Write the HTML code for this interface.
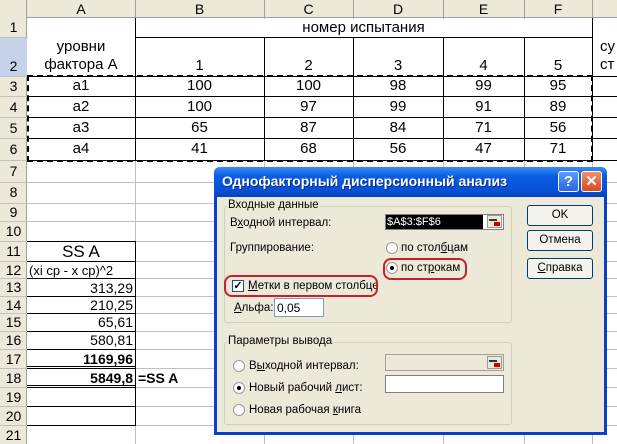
<!DOCTYPE html>
<html><head><meta charset="utf-8"><style>
*{margin:0;padding:0;box-sizing:border-box}
body{width:617px;height:444px;overflow:hidden;background:#fff;position:relative;font-family:"Liberation Sans",Arial,sans-serif}
div{position:absolute}
.h{background:#ECE9D8;color:#000;font-size:14px;text-align:center}
.vl{width:1px;background:#c0c0c0}
.hl{height:1px;background:#c0c0c0}
.bv{width:1px;background:#000}
.bh{height:1px;background:#000}
.c{font-size:15px;text-align:center;color:#000}
.r{font-size:14px;text-align:right;color:#000}
.d{font-family:"Liberation Sans",Tahoma,sans-serif;font-size:11.5px;color:#000;white-space:nowrap}
.btn{background:#f4f3ee;border:1px solid #003c74;border-radius:3px;font-size:11.5px;text-align:center;line-height:18px}
.rad{width:12px;height:12px;border-radius:50%;background:#fff;border:1px solid #9a9a9a}
</style></head><body>
<div class="h" style="left:0;top:0;width:617px;height:18px;border-bottom:1px solid #a0a0a0"></div>
<div class="h" style="left:0;top:0;width:27px;height:444px;border-right:1px solid #a0a0a0"></div>
<div class="h" style="left:0;top:37px;width:27px;height:39px;background:#c5d2ea"></div>
<div class="h" style="left:27px;top:1px;width:108px">A</div>
<div class="h" style="left:135px;top:1px;width:129px">B</div>
<div class="h" style="left:264px;top:1px;width:89px">C</div>
<div class="h" style="left:353px;top:1px;width:90px">D</div>
<div class="h" style="left:443px;top:1px;width:81px">E</div>
<div class="h" style="left:524px;top:1px;width:68px">F</div>
<div class="vl" style="left:135px;top:0;height:18px;background:#a0a0a0"></div>
<div class="vl" style="left:264px;top:0;height:18px;background:#a0a0a0"></div>
<div class="vl" style="left:353px;top:0;height:18px;background:#a0a0a0"></div>
<div class="vl" style="left:443px;top:0;height:18px;background:#a0a0a0"></div>
<div class="vl" style="left:524px;top:0;height:18px;background:#a0a0a0"></div>
<div class="vl" style="left:592px;top:0;height:18px;background:#a0a0a0"></div>
<div class="h" style="left:0;top:19px;width:27px;background:none">1</div>
<div class="h" style="left:0;top:58px;width:27px;background:none">2</div>
<div class="h" style="left:0;top:78px;width:27px;background:none">3</div>
<div class="h" style="left:0;top:99px;width:27px;background:none">4</div>
<div class="h" style="left:0;top:120px;width:27px;background:none">5</div>
<div class="h" style="left:0;top:141px;width:27px;background:none">6</div>
<div class="h" style="left:0;top:163px;width:27px;background:none">7</div>
<div class="h" style="left:0;top:184px;width:27px;background:none">8</div>
<div class="h" style="left:0;top:204px;width:27px;background:none">9</div>
<div class="h" style="left:0;top:223px;width:27px;background:none">10</div>
<div class="h" style="left:0;top:243px;width:27px;background:none">11</div>
<div class="h" style="left:0;top:262px;width:27px;background:none">12</div>
<div class="h" style="left:0;top:279px;width:27px;background:none">13</div>
<div class="h" style="left:0;top:297px;width:27px;background:none">14</div>
<div class="h" style="left:0;top:314px;width:27px;background:none">15</div>
<div class="h" style="left:0;top:332px;width:27px;background:none">16</div>
<div class="h" style="left:0;top:351px;width:27px;background:none">17</div>
<div class="h" style="left:0;top:370px;width:27px;background:none">18</div>
<div class="h" style="left:0;top:389px;width:27px;background:none">19</div>
<div class="h" style="left:0;top:408px;width:27px;background:none">20</div>
<div class="h" style="left:0;top:427px;width:27px;background:none">21</div>
<div class="hl" style="left:0;top:37px;width:617px"></div>
<div class="hl" style="left:0;top:76px;width:617px"></div>
<div class="hl" style="left:0;top:96px;width:617px"></div>
<div class="hl" style="left:0;top:117px;width:617px"></div>
<div class="hl" style="left:0;top:138px;width:617px"></div>
<div class="hl" style="left:0;top:160px;width:617px"></div>
<div class="hl" style="left:0;top:182px;width:617px"></div>
<div class="hl" style="left:0;top:203px;width:617px"></div>
<div class="hl" style="left:0;top:221px;width:617px"></div>
<div class="hl" style="left:0;top:241px;width:617px"></div>
<div class="hl" style="left:0;top:261px;width:617px"></div>
<div class="hl" style="left:0;top:278px;width:617px"></div>
<div class="hl" style="left:0;top:296px;width:617px"></div>
<div class="hl" style="left:0;top:313px;width:617px"></div>
<div class="hl" style="left:0;top:331px;width:617px"></div>
<div class="hl" style="left:0;top:349px;width:617px"></div>
<div class="hl" style="left:0;top:368px;width:617px"></div>
<div class="hl" style="left:0;top:387px;width:617px"></div>
<div class="hl" style="left:0;top:406px;width:617px"></div>
<div class="hl" style="left:0;top:425px;width:617px"></div>
<div class="vl" style="left:135px;top:18px;height:426px"></div>
<div class="vl" style="left:264px;top:18px;height:426px"></div>
<div class="vl" style="left:353px;top:18px;height:426px"></div>
<div class="vl" style="left:443px;top:18px;height:426px"></div>
<div class="vl" style="left:524px;top:18px;height:426px"></div>
<div class="vl" style="left:592px;top:18px;height:426px"></div>
<div style="left:28px;top:19px;width:107px;height:57px;background:#fff"></div>
<div style="left:136px;top:19px;width:456px;height:18px;background:#fff"></div>
<div style="left:593px;top:19px;width:24px;height:57px;background:#fff"></div>
<div class="bh" style="left:135px;top:37px;width:457px"></div>
<div class="bh" style="left:27px;top:76px;width:590px"></div>
<div class="bh" style="left:27px;top:96px;width:590px"></div>
<div class="bh" style="left:27px;top:117px;width:590px"></div>
<div class="bh" style="left:27px;top:138px;width:590px"></div>
<div class="bh" style="left:27px;top:160px;width:590px"></div>
<div class="bv" style="left:135px;top:18px;height:142px"></div>
<div class="bv" style="left:264px;top:37px;height:123px"></div>
<div class="bv" style="left:353px;top:37px;height:123px"></div>
<div class="bv" style="left:443px;top:37px;height:123px"></div>
<div class="bv" style="left:524px;top:37px;height:123px"></div>
<div class="bv" style="left:592px;top:18px;height:142px"></div>
<div style="left:27px;top:75px;width:566px;height:87px;border:2px dashed #000"></div>
<div class="c" style="left:27px;top:38px;width:108px;line-height:18px">уровни<br>фактора А</div>
<div class="c" style="left:135px;top:19px;width:457px">номер испытания</div>
<div class="c" style="left:135px;top:57px;width:129px">1</div>
<div class="c" style="left:264px;top:57px;width:89px">2</div>
<div class="c" style="left:353px;top:57px;width:90px">3</div>
<div class="c" style="left:443px;top:57px;width:81px">4</div>
<div class="c" style="left:524px;top:57px;width:68px">5</div>
<div class="c" style="left:600px;top:38px;line-height:18px;text-align:left">су<br>ст</div>
<div class="c" style="left:27px;top:77px;width:108px">а1</div><div class="c" style="left:135px;top:77px;width:129px">100</div><div class="c" style="left:264px;top:77px;width:89px">100</div><div class="c" style="left:353px;top:77px;width:90px">98</div><div class="c" style="left:443px;top:77px;width:81px">99</div><div class="c" style="left:524px;top:77px;width:68px">95</div>
<div class="c" style="left:27px;top:98px;width:108px">а2</div><div class="c" style="left:135px;top:98px;width:129px">100</div><div class="c" style="left:264px;top:98px;width:89px">97</div><div class="c" style="left:353px;top:98px;width:90px">99</div><div class="c" style="left:443px;top:98px;width:81px">91</div><div class="c" style="left:524px;top:98px;width:68px">89</div>
<div class="c" style="left:27px;top:119px;width:108px">а3</div><div class="c" style="left:135px;top:119px;width:129px">65</div><div class="c" style="left:264px;top:119px;width:89px">87</div><div class="c" style="left:353px;top:119px;width:90px">84</div><div class="c" style="left:443px;top:119px;width:81px">71</div><div class="c" style="left:524px;top:119px;width:68px">56</div>
<div class="c" style="left:27px;top:140px;width:108px">а4</div><div class="c" style="left:135px;top:140px;width:129px">41</div><div class="c" style="left:264px;top:140px;width:89px">68</div><div class="c" style="left:353px;top:140px;width:90px">56</div><div class="c" style="left:443px;top:140px;width:81px">47</div><div class="c" style="left:524px;top:140px;width:68px">71</div>
<div class="bv" style="left:135px;top:241px;height:184px"></div>
<div class="bh" style="left:27px;top:241px;width:109px"></div>
<div class="bh" style="left:27px;top:261px;width:109px"></div>
<div class="bh" style="left:27px;top:278px;width:109px"></div>
<div class="bh" style="left:27px;top:296px;width:109px"></div>
<div class="bh" style="left:27px;top:313px;width:109px"></div>
<div class="bh" style="left:27px;top:331px;width:109px"></div>
<div class="bh" style="left:27px;top:349px;width:109px"></div>
<div class="bh" style="left:27px;top:366px;width:109px"></div>
<div class="bh" style="left:27px;top:368px;width:109px"></div>
<div class="bh" style="left:27px;top:385px;width:109px"></div>
<div class="bh" style="left:27px;top:387px;width:109px"></div>
<div class="bh" style="left:27px;top:406px;width:109px"></div>
<div class="bh" style="left:27px;top:425px;width:109px"></div>
<div class="c" style="left:27px;top:242px;width:108px;font-size:17px">SS A</div>
<div style="left:29px;top:263px;font-size:13px">(xi cp - x cp)^2</div>
<div class="r" style="left:27px;top:280px;width:106px">313,29</div>
<div class="r" style="left:27px;top:297px;width:106px">210,25</div>
<div class="r" style="left:27px;top:314px;width:106px">65,61</div>
<div class="r" style="left:27px;top:332px;width:106px">580,81</div>
<div class="r" style="left:27px;top:351px;width:106px;font-weight:bold">1169,96</div>
<div class="r" style="left:27px;top:370px;width:106px;font-weight:bold">5849,8</div>
<div style="left:138px;top:370px;font-size:14px;font-weight:bold">=SS A</div>
<div style="left:214px;top:167px;width:393px;height:268px;background:#ECE9D8;border:3px solid #0842c8;border-top:none;border-radius:6px 6px 0 0"></div>
<div style="left:214px;top:167px;width:393px;height:30px;border-radius:7px 7px 0 0;background:linear-gradient(#3c8cf5,#0a5ee0 30%,#0550d8 80%,#0442b8)"></div>
<div style="left:222px;top:173px;color:#fff;font-weight:bold;font-size:14px;text-shadow:1px 1px #0a2a80">Однофакторный дисперсионный анализ</div>
<div style="left:558px;top:171px;width:21px;height:21px;border:1px solid #fff;border-radius:3px;background:linear-gradient(#5a9cff,#2a64e8);color:#fff;font-weight:bold;font-size:15px;text-align:center;line-height:19px">?</div>
<div style="left:581px;top:171px;width:21px;height:21px;border:1px solid #fff;border-radius:3px;background:linear-gradient(#f0906a,#d84820);color:#fff;font-weight:bold;font-size:15px;text-align:center;line-height:19px">✕</div>
<div style="left:224px;top:206px;width:288px;height:117px;border:1px solid #d0d0bf;border-radius:3px"></div>
<div class="d" style="left:227px;top:199px;background:#ECE9D8;padding:0 1px">Входные данные</div>
<div class="d" style="left:230px;top:217px">В<u>х</u>одной интервал:</div>
<div style="left:385px;top:214px;width:119px;height:16px;background:#fff;border:1px solid #7f7f7f"></div>
<div style="left:386px;top:215px;width:97px;height:14px;background:#000;color:#fff;font-size:11px;line-height:14px;padding-left:1px">$A$3:$F$6</div>
<div style="left:487px;top:215px;width:15px;height:13px;background:#ECE9D8;border:1px solid #999"></div>
<div style="left:489px;top:219px;width:8px;height:2px;background:#333"></div><div style="left:494px;top:222px;width:6px;height:4px;background:#c00"></div>
<div class="d" style="left:230px;top:242px">Группирование:</div>
<div class="rad" style="left:386px;top:242px"></div>
<div class="d" style="left:401px;top:242px">по стол<u>б</u>цам</div>
<div class="rad" style="left:386px;top:262px"></div><div style="left:390px;top:266px;width:4px;height:4px;border-radius:50%;background:#000"></div>
<div class="d" style="left:401px;top:262px">по ст<u>р</u>окам</div>
<div style="left:383px;top:258px;width:84px;height:22px;border:2px solid #c8202a;border-radius:8px"></div>
<div style="left:232px;top:280px;width:12px;height:12px;background:#fff;border:1px solid #1c5180;font-size:11px;line-height:10px;text-align:center;font-weight:bold">✓</div>
<div class="d" style="left:248px;top:280px"><u>М</u>етки в первом столбце</div>
<div style="left:224px;top:275px;width:154px;height:22px;border:2px solid #c8202a;border-radius:8px"></div>
<div class="d" style="left:234px;top:302px"><u>А</u>льфа:</div>
<div style="left:274px;top:298px;width:50px;height:19px;background:#fff;border:1px solid #7f9db9;font-size:12px;padding:2px 2px">0,05</div>
<div class="btn" style="left:527px;top:205px;width:66px;height:21px">OK</div>
<div class="btn" style="left:527px;top:230px;width:66px;height:21px">Отмена</div>
<div class="btn" style="left:527px;top:258px;width:66px;height:21px"><u>С</u>правка</div>
<div style="left:224px;top:342px;width:288px;height:83px;border:1px solid #d0d0bf;border-radius:3px"></div>
<div class="d" style="left:227px;top:335px;background:#ECE9D8;padding:0 1px">Параметры вывода</div>
<div class="rad" style="left:233px;top:360px"></div>
<div class="d" style="left:249px;top:360px">В<u>ы</u>ходной интервал:</div>
<div style="left:385px;top:354px;width:119px;height:17px;border:1px solid #a0a0a0;background:#ECE9D8"></div>
<div style="left:487px;top:356px;width:15px;height:13px;background:#ECE9D8;border:1px solid #999"></div>
<div style="left:489px;top:360px;width:8px;height:2px;background:#333"></div><div style="left:494px;top:363px;width:6px;height:4px;background:#c00"></div>
<div class="rad" style="left:233px;top:382px"></div><div style="left:237px;top:386px;width:4px;height:4px;border-radius:50%;background:#000"></div>
<div class="d" style="left:249px;top:382px">Новый рабочий <u>л</u>ист:</div>
<div style="left:385px;top:375px;width:119px;height:18px;background:#fff;border:1px solid #7f7f7f"></div>
<div class="rad" style="left:233px;top:404px"></div>
<div class="d" style="left:249px;top:404px">Новая рабочая <u>к</u>нига</div>
</body></html>
